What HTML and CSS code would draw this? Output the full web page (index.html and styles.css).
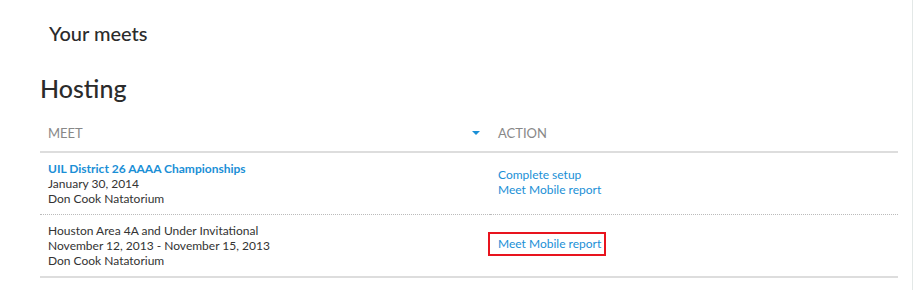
FILE: index.html
```html
<!DOCTYPE html>
<html lang="en">
<head>
    <meta charset="UTF-8">
    <title>Your meets</title>
    <link rel="stylesheet" href="styles.css">
</head>
<body>
    <div class="page">
        <h1 class="page-title">Your meets</h1>
        <h2 class="section-title">Hosting</h2>
        <table class="meets">
            <thead>
                <tr>
                    <th class="col-meet">Meet <span class="sort-arrow"></span></th>
                    <th class="col-action">Action</th>
                </tr>
            </thead>
            <tbody>
                <tr>
                    <td>
                        <a href="#" class="meet-name">UIL District 26 AAAA Championships</a>
                        <div>January 30, 2014</div>
                        <div>Don Cook Natatorium</div>
                    </td>
                    <td class="actions">
                        <a href="#">Complete setup</a>
                        <a href="#">Meet Mobile report</a>
                    </td>
                </tr>
                <tr>
                    <td>
                        <div>Houston Area 4A and Under Invitational</div>
                        <div>November 12, 2013 - November 15, 2013</div>
                        <div>Don Cook Natatorium</div>
                    </td>
                    <td class="actions">
                        <a href="#" class="highlight">Meet Mobile report</a>
                    </td>
                </tr>
            </tbody>
        </table>
    </div>
</body>
</html>
```

FILE: styles.css
```css
body {
    margin: 0;
    font-family: Lato, "Open Sans", Arial, sans-serif;
    color: #333;
    background-color: #fff;
}
.page {
    width: 913px;
    height: 290px;
    overflow: hidden;
    border-right: 1px solid #e3e8e7;
    box-sizing: border-box;
    padding: 21px 16px 0 40px;
}
.page-title {
    margin: 0 0 0 9px;
    font-size: 20px;
    line-height: 24px;
    font-weight: 500;
    color: #2b2b2b;
}
.section-title {
    margin: 29px 0 0 0;
    font-size: 25px;
    line-height: 28px;
    font-weight: 500;
    color: #2b2b2b;
}
.meets {
    width: 858px;
    margin-top: 12px;
    border-collapse: collapse;
    font-size: 12px;
    line-height: 15px;
}
.meets th {
    text-align: left;
    font-weight: normal;
    text-transform: uppercase;
    color: #888;
    font-size: 13px;
    line-height: 18px;
    padding: 10px 8px 9px 8px;
    border-bottom: 2px solid #ddd;
}
.col-meet {
    width: 434px;
    position: relative;
}
.sort-arrow {
    position: absolute;
    right: 10px;
    top: 17px;
    border-left: 4px solid transparent;
    border-right: 4px solid transparent;
    border-top: 4px solid #1a8fd6;
}
.meets td {
    padding: 8px;
    vertical-align: middle;
    border-bottom: 1px dotted #bbb;
}
.meets tr:last-child td {
    border-bottom: 2px solid #ddd;
}
.meets td.actions {
    padding-top: 6px;
    padding-bottom: 10px;
}
.meets a {
    color: #1a8fd6;
    text-decoration: none;
}
.meet-name {
    display: block;
    font-weight: bold;
}
.actions a {
    display: block;
}
.actions .highlight {
    display: inline-block;
    margin-left: -10px;
    padding: 2px 3px 3px 8px;
    border: 2px solid #e8141e;
}
```
